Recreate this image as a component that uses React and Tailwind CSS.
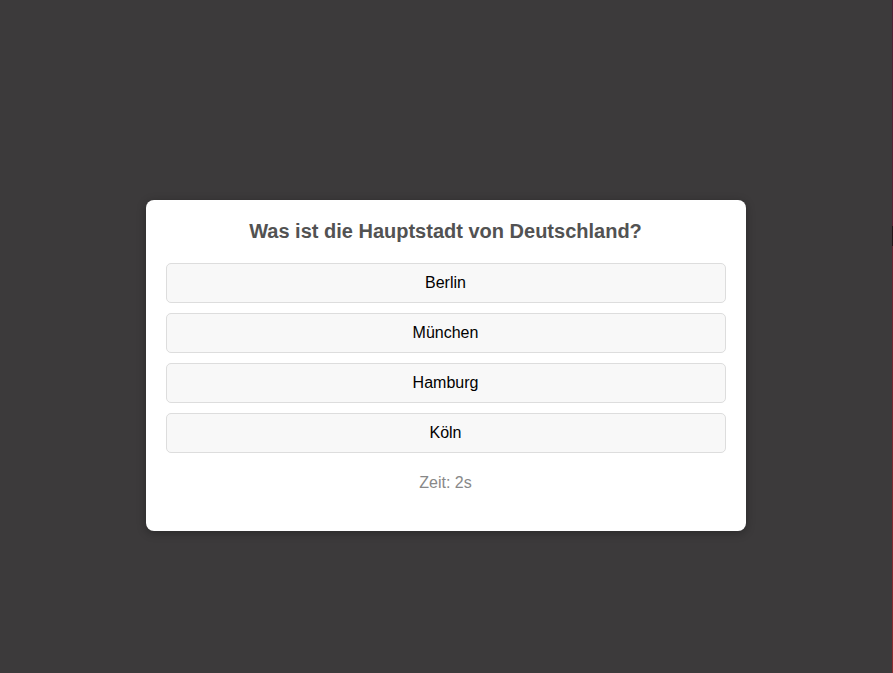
export default function App() {
  const options = ["Berlin", "München", "Hamburg", "Köln"];
  return (
    <div className="flex h-[673px] w-[893px] overflow-hidden bg-[#3c3a3b]" style={{ fontFamily: '"Liberation Sans", Arial, sans-serif' }}>
      <div className="flex flex-1 items-center justify-center">
        <div className="mt-[58px] w-[600px] rounded-lg bg-white px-5 pb-[39px] pt-5 shadow-[0_2px_10px_rgba(0,0,0,0.3)] ml-[-1px]">
          <h2 className="mb-[21px] text-center text-[20px] font-bold leading-[22px] text-[#525252]">
            Was ist die Hauptstadt von Deutschland?
          </h2>
          <div className="flex flex-col gap-[10px]">
            {options.map((o) => (
              <button
                key={o}
                className="h-10 w-full rounded-[5px] border border-[#dddddd] bg-[#f8f8f8] text-[16px] text-black"
              >
                {o}
              </button>
            ))}
          </div>
          <p className="mt-[21px] text-center text-[16px] leading-[18px] text-[#888888]">Zeit: 2s</p>
        </div>
      </div>
      <div className="flex w-px flex-col">
        <div className="h-[226px] bg-gradient-to-b from-[#4f1f35] to-[#5d2035]"></div>
        <div className="h-[20px] bg-[#2a1018]"></div>
        <div className="flex-1 bg-gradient-to-b from-[#6a2232] to-[#8c2a30]"></div>
      </div>
    </div>
  );
}
